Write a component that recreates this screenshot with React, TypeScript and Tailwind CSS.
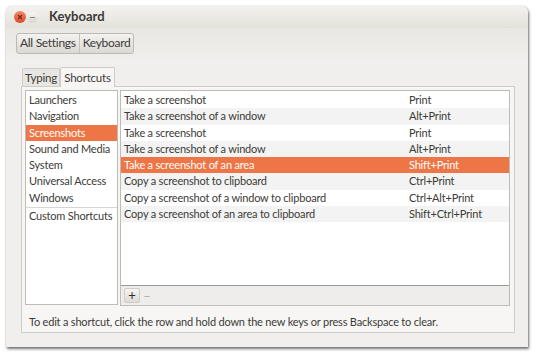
import React from "react";

const font = { fontFamily: 'Lato, "Open Sans", "DejaVu Sans", sans-serif' };

const sections = [
  "Launchers",
  "Navigation",
  "Screenshots",
  "Sound and Media",
  "System",
  "Universal Access",
  "Windows",
];

const shortcuts: [string, string][] = [
  ["Take a screenshot", "Print"],
  ["Take a screenshot of a window", "Alt+Print"],
  ["Take a screenshot", "Print"],
  ["Take a screenshot of a window", "Alt+Print"],
  ["Take a screenshot of an area", "Shift+Print"],
  ["Copy a screenshot to clipboard", "Ctrl+Print"],
  ["Copy a screenshot of a window to clipboard", "Ctrl+Alt+Print"],
  ["Copy a screenshot of an area to clipboard", "Shift+Ctrl+Print"],
];

function TitleBar() {
  return (
    <div className="h-[22px] flex items-center pl-[8px] bg-gradient-to-b from-[#f4f2ee] to-[#e4e1db] rounded-t-[6px]">
      {/* close */}
      <div className="w-[12px] h-[12px] rounded-full bg-gradient-to-b from-[#f38a63] to-[#d9472a] flex items-center justify-center">
        <svg width="6" height="6" viewBox="0 0 6 6">
          <path d="M1 1L5 5M5 1L1 5" stroke="#7a2a16" strokeWidth="1.2" />
        </svg>
      </div>
      {/* minimize */}
      <div className="ml-[1px] w-[11px] h-[11px] rounded-full bg-gradient-to-b from-[#f8f7f5] to-[#d8d5cf] flex items-center justify-center">
        <div className="w-[5px] h-px bg-[#8a8782]" />
      </div>
      <span className="ml-[11px] text-[13px] font-bold text-[#3c3b37]" style={font}>
        Keyboard
      </span>
    </div>
  );
}

function Toolbar() {
  return (
    <div className="h-[30px] flex items-center pl-[10px] bg-gradient-to-b from-[#e9e7e3] to-[#efeeeb]">
      <div className="flex h-[21px] border border-[#bdbab4] rounded-[3px] bg-gradient-to-b from-[#f4f3f1] to-[#dcd9d4] text-[12px] tracking-[-0.3px] text-[#3c3b37]" style={font}>
        <div className="px-[3px] flex items-center border-r border-[#c4c1bb]">All Settings</div>
        <div className="px-[3px] flex items-center">Keyboard</div>
      </div>
    </div>
  );
}

function SectionList() {
  return (
    <div className="w-[93px] h-[215px] bg-white border border-[#bebcb7] pt-px text-[11px] tracking-[-0.2px] text-[#3c3b37] whitespace-nowrap" style={font}>
      {sections.map((s) => (
        <div
          key={s}
          className={
            s === "Screenshots"
              ? "h-[16.3px] flex items-center pl-[3px] bg-[#ee7545] text-white"
              : "h-[16.3px] flex items-center pl-[3px]"
          }
        >
          {s}
        </div>
      ))}
      <div className="h-px bg-[#d8d6d2] mt-[1px]" />
      <div className="h-[16.3px] flex items-center pl-[3px]">Custom Shortcuts</div>
    </div>
  );
}

function ShortcutList() {
  return (
    <div className="flex-1 h-[216px] flex flex-col border border-[#bebcb7] bg-white text-[11px] tracking-[-0.2px] text-[#3c3b37] whitespace-nowrap" style={font}>
      <div className="flex-1 pt-px">
        {shortcuts.map(([name, key], i) => (
          <div
            key={i}
            className={
              i === 4
                ? "h-[16.3px] flex items-center bg-[#ee7545] text-white"
                : i % 2 === 1
                ? "h-[16.3px] flex items-center bg-[#f3f3f3]"
                : "h-[16.3px] flex items-center"
            }
          >
            <span className="w-[288px] pl-[3px]">{name}</span>
            <span>{key}</span>
          </div>
        ))}
      </div>
      <div className="h-[20px] border-t border-[#9c9a96] bg-[#eeedeb] flex items-center pl-[3px] gap-px">
        <div className="w-[16px] h-[15px] rounded-[2px] bg-gradient-to-b from-[#f6f5f3] to-[#dedbd6] border border-[#cfccc6] flex items-center justify-center text-[13px] leading-none text-[#2d2c29]">
          +
        </div>
        <div className="w-[12px] h-[15px] flex items-center justify-center text-[12px] leading-none text-[#aaa7a2]">
          −
        </div>
      </div>
    </div>
  );
}

export default function App() {
  return (
    <div className="w-[540px] h-[359px] bg-white pt-[6px] pl-[6px]">
      <div className="w-[522px] h-[341px] flex flex-col bg-[#f0efed] rounded-t-[6px] shadow-[1px_2px_3px_rgba(0,0,0,0.55),0_0_1px_rgba(0,0,0,0.4)]">
        <TitleBar />
        <Toolbar />
        <div className="flex-1 pl-[15px] pr-[13px] pt-[8px]">
          {/* tabs */}
          <div className="flex items-end h-[20px] pl-[1px] text-[11.5px] tracking-[-0.2px] text-[#3c3b37]" style={font}>
            <div className="w-[38px] h-[18px] flex items-center justify-center bg-[#e8e6e2] border border-b-0 border-[#cfccc6] rounded-t-[2px]">
              Typing
            </div>
            <div className="w-[55px] h-[20px] flex items-center justify-center bg-[#f7f6f5] border border-b-0 border-[#cfccc6] rounded-t-[2px] -mb-px relative z-10">
              Shortcuts
            </div>
          </div>
          <div className="w-[494px] h-[247px] bg-[#f7f6f5] border border-[#cfccc6] pt-[3px] pl-[3px] pr-[4px] flex flex-col">
            <div className="flex gap-[2px]">
              <SectionList />
              <ShortcutList />
            </div>
            <div className="pl-[4px] pt-[8px] text-[11px] tracking-[-0.2px] text-[#3c3b37]" style={font}>
              To edit a shortcut, click the row and hold down the new keys or press Backspace to clear.
            </div>
          </div>
        </div>
      </div>
    </div>
  );
}
